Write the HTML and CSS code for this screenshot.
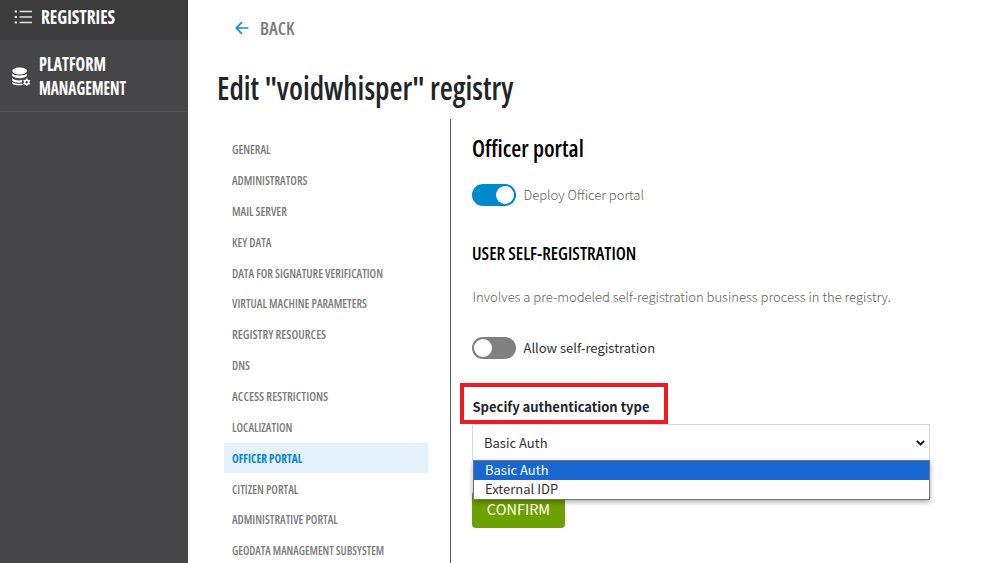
FILE: index.html
```
<!DOCTYPE html>
<html lang="en">
<head>
<meta charset="utf-8">
<title>Edit registry</title>
<link rel="stylesheet" href="styles.css">
</head>
<body>
<div class="app">
  <aside class="sidebar">
    <a class="side-item side-registries">
      <svg class="icon-list" width="18" height="16" viewBox="0 0 18 16" fill="none" stroke="#e4e4e4" stroke-width="1.5"><path d="M5.500 2.500h12.500M5.500 8h12.500M5.500 13.500h12.500"/><path stroke-width="2.200" d="M.7 2.500h2.300M.7 8h2.300M.7 13.500h2.300"/></svg>
      <span class="condensed">REGISTRIES</span>
    </a>
    <a class="side-item side-platform">
      <svg class="icon-db" width="19" height="20" viewBox="0 0 19 20" fill="#fff"><ellipse cx="7.6" cy="4" rx="7.4" ry="3.4"/><path d="M.2 6.200c1.800 3 13 3 14.800 0v2.600c-1.800 3.200-13 3.200-14.800 0zM.2 11c1.500 2 6 2.900 10.200 2.100-.5.900-.6 1.700-.5 2.400-4.500.5-8.600-.3-9.700-2.100z"/><path d="M.2 14.800c1.600 1.700 6 2.400 9.900 1.800l.8 1.500C6 18.800.2 17.800.2 15.900z"/><circle cx="14.700" cy="15.200" r="2" fill="none" stroke="#fff" stroke-width="1.600"/><path fill="none" stroke="#fff" stroke-width="1.500" d="M14.700 11.500v1.500M14.700 17.400v1.500M11.500 13.300l1.300.8M16.600 16.300l1.300.8M11.500 17.100l1.300-.8M16.600 14.100l1.300-.8"/></svg>
      <span class="lines"><span class="condensed platform">PLATFORM</span><span class="condensed management">MANAGEMENT</span></span>
    </a>
  </aside>
  <main class="main">
    <a class="back">
      <svg width="14" height="14" viewBox="0 0 14 14" fill="none" stroke="#0f8fd6" stroke-width="1.700"><path d="M13.400 7H1.500M7 1.200L1.300 7L7 12.800"/></svg>
      <span class="condensed">BACK</span>
    </a>
    <h1 class="title condensed">Edit "voidwhisper" registry</h1>
    <div class="columns">
      <nav class="menu">
        <a><span class="condensed">GENERAL</span></a>
        <a><span class="condensed">ADMINISTRATORS</span></a>
        <a><span class="condensed">MAIL SERVER</span></a>
        <a><span class="condensed">KEY DATA</span></a>
        <a><span class="condensed">DATA FOR SIGNATURE VERIFICATION</span></a>
        <a><span class="condensed">VIRTUAL MACHINE PARAMETERS</span></a>
        <a><span class="condensed wide">REGISTRY RESOURCES</span></a>
        <a><span class="condensed">DNS</span></a>
        <a><span class="condensed wide">ACCESS RESTRICTIONS</span></a>
        <a><span class="condensed">LOCALIZATION</span></a>
        <a class="active"><span class="condensed">OFFICER PORTAL</span></a>
        <a><span class="condensed">CITIZEN PORTAL</span></a>
        <a><span class="condensed">ADMINISTRATIVE PORTAL</span></a>
        <a><span class="condensed narrow">GEODATA MANAGEMENT SUBSYSTEM</span></a>
      </nav>
      <section class="panel">
        <h2 class="condensed">Officer portal</h2>
        <div class="switch-row light"><i class="switch on"></i><span>Deploy Officer portal</span></div>
        <h3 class="condensed">USER SELF-REGISTRATION</h3>
        <p class="hint">Involves a pre-modeled self-registration business process in the registry.</p>
        <div class="switch-row"><i class="switch"></i><span>Allow self-registration</span></div>
        <div class="label">Specify authentication type</div>
        <div class="select">
          <span>Basic Auth</span>
          <svg width="9" height="6" viewBox="0 0 9 6" fill="none" stroke="#111" stroke-width="1.800"><path d="M.8.8L4.500 4.500L8.200.8"/></svg>
          <div class="options">
            <div class="option selected">Basic Auth</div>
            <div class="option">External IDP</div>
          </div>
        </div>
        <button class="confirm">CONFIRM</button>
      </section>
    </div>
  </main>
</div>
</body>
</html>
```
FILE: styles.css
```
*, *::before, *::after { box-sizing: border-box; }
body { margin: 0; background: #fff; font-family: "Noto Sans CJK SC", sans-serif; font-size: 13px; color: #333; }
.app { display: flex; height: 563px; overflow: hidden; }
.condensed { font-family: "Open Sans", sans-serif; font-stretch: 75%; white-space: nowrap; transform-origin: 0 50%; }

.sidebar { width: 188px; flex: none; background: #464648; color: #fff; }
.side-item { display: flex; align-items: center; font-size: 19px; font-weight: 700; line-height: 24px; }
.side-item .condensed { transform: scaleX(.91); }
.side-item .platform { transform: scaleX(.85); }
.side-item .management { transform: scaleX(.805); }
.lines { display: flex; flex-direction: column; }
.side-registries { height: 40px; padding: 0 0 6px 14px; gap: 9px; background: #3b3b3b; }
.side-platform { height: 72px; padding-left: 11.500px; gap: 8.500px; border-bottom: 1px solid #535355; }
.icon-db { margin-top: 2px; }

.main { flex: 1; min-width: 0; }
.back { display: flex; align-items: center; gap: 11px; height: 28px; margin: 14px 0 0 47px; font-size: 18.500px; font-weight: 600; color: #7a7a7a; }
.back .condensed { padding-bottom: 2px; transform: scaleX(.97); }
.title { width: 320px; margin: 22px 0 0 29px; font-size: 32px; line-height: 48px; font-weight: 600; color: #212529; transform: scaleX(.939); }
.columns { display: flex; height: 451px; margin-top: 7px; }

.menu { width: 262px; flex: none; padding: 15px 22px 0 36px; font-size: 13px; font-weight: 600; color: #7c7c7c; }
.menu a { display: flex; align-items: center; height: 30.860px; padding: 0 0 .6px 8px; }
.menu .condensed { transform: scaleX(.89); }
.menu .wide { transform: scaleX(.925); }
.menu .narrow { transform: scaleX(.865); }
.menu .active { color: #0a87cf; background: #e6f2fb; font-weight: 700; }
.menu .active .condensed { transform: scaleX(.865); }

.panel { flex: 1; padding: 11px 0 0 21px; border-left: 1px solid #606060; }
h2 { width: 200px; margin: 0; font-size: 24px; line-height: 36px; font-weight: 600; color: #000; transform: scaleX(.957); }
h3 { width: 220px; margin: 35px 0 0; font-size: 18.500px; line-height: 24px; font-weight: 600; color: #000; transform: scaleX(.96); }
.switch-row { display: flex; align-items: center; gap: 7.500px; height: 22px; }
.switch-row span { padding-bottom: 1.500px; }
.switch-row.light { margin-top: 18px; font-weight: 300; color: #606060; }
.switch { width: 44px; height: 22px; padding: 2px; border-radius: 11px; background: #808080; }
.switch::before { content: ""; display: block; width: 18px; height: 18px; border-radius: 50%; background: #fff; }
.switch.on { background: #0088ce; }
.switch.on::before { margin-left: 22px; }
.hint { margin: 22px 0 30px; padding-left: .5px; line-height: 20px; font-weight: 300; color: #606060; white-space: nowrap; }
.label { position: relative; width: fit-content; margin-top: 38px; padding-left: .5px; line-height: 20px; font-weight: 700; color: #212529; }
.label::after { content: ""; position: absolute; left: -12px; top: -14px; width: 208px; height: 41px; border: 4px solid #ed1c24; z-index: 1; }
.select { position: relative; display: flex; align-items: center; justify-content: space-between; width: 458px; height: 37px; margin-top: 7px; padding: 0 4px 0 11px; border: 1px solid #d8d8e0; }
.options { position: absolute; left: 0; top: 35px; width: 457px; height: 40px; border: 1px solid #777; background: #fff; box-shadow: 0 2px 5px rgba(0, 0, 0, .35); line-height: 17px; }
.option { height: 19px; padding-left: 11px; }
.option.selected { background: #1967d2; color: #fff; }
.confirm { display: block; width: 93px; height: 37px; margin-top: 30px; padding: 0 0 2px; border: 0; border-radius: 4px; background: #6ca100; font: 14.500px/35px "Noto Sans CJK SC", sans-serif; color: #fff; }
```
